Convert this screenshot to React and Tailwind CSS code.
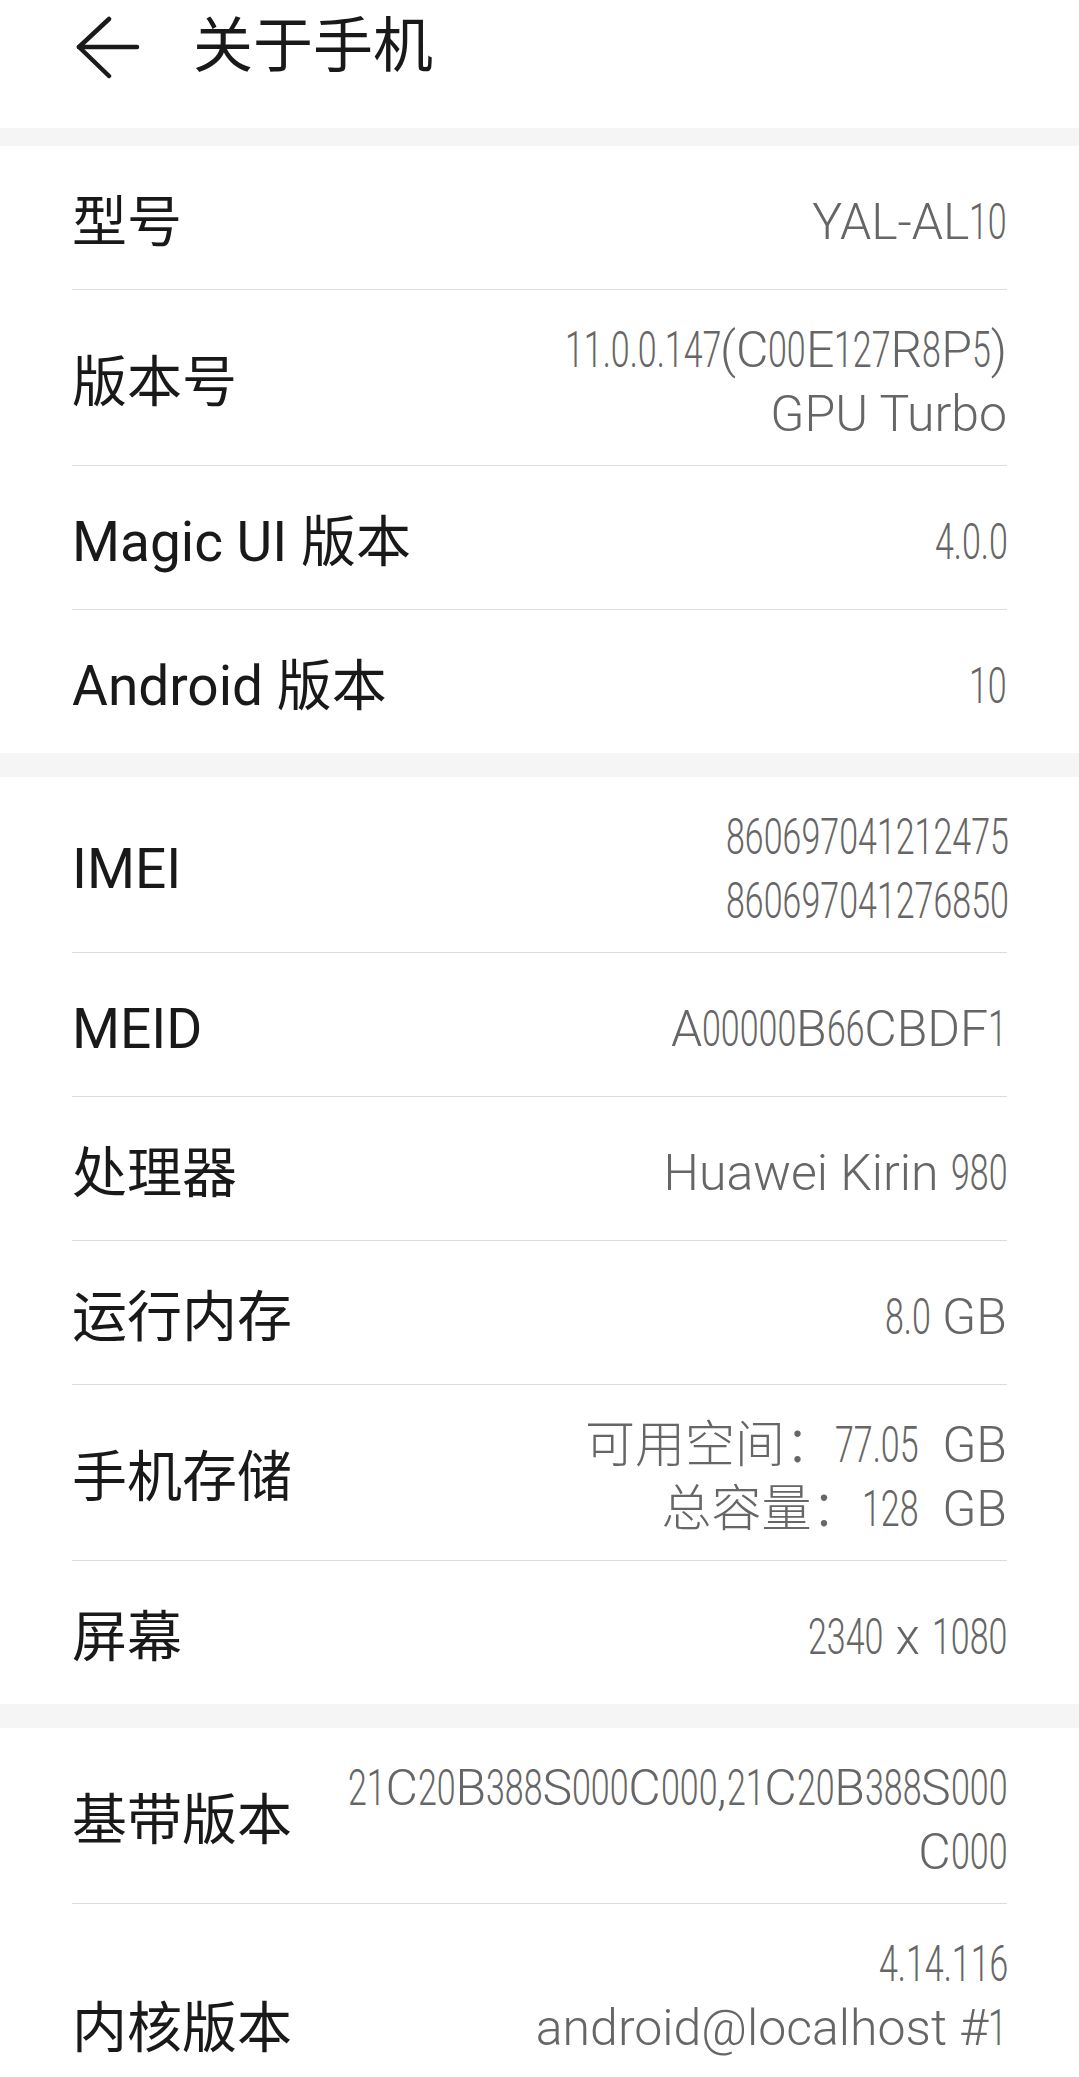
import React from 'react'

const FONT = "font-['Roboto','Noto_Sans_CJK_SC',sans-serif]"

// the phone font has tall narrow digits: squeeze digit runs and pull the rest back
const runWidth = (s) => s.split('').reduce((w, c) => w + (c === '.' ? 0.263 : 0.5615), 0)

const Val = ({ text }) => {
    const parts = text.split(/([0-9.]+)/)
    return (
        <span className="whitespace-pre">
            {parts.map((p, i) =>
                /^[0-9.]+$/.test(p) ? (
                    <span
                        key={i}
                        className="inline-block origin-left scale-x-[0.68] tabular-nums"
                        style={{ marginRight: `${-runWidth(p) * 0.32}em` }}
                    >
                        {p}
                    </span>
                ) : (
                    <span key={i}>{p}</span>
                )
            )}
        </span>
    )
}

const sections = [
    [
        { label: '型号', value: ['YAL-AL10'] },
        { label: '版本号', value: ['11.0.0.147(C00E127R8P5)', 'GPU Turbo'] },
        { label: 'Magic UI 版本', value: ['4.0.0'] },
        { label: 'Android 版本', value: ['10'] },
    ],
    [
        { label: 'IMEI', value: ['860697041212475', '860697041276850'] },
        { label: 'MEID', value: ['A00000B66CBDF1'] },
        { label: '处理器', value: ['Huawei Kirin 980'] },
        { label: '运行内存', value: ['8.0 GB'] },
        { label: '手机存储', value: ['可用空间：77.05  GB', '总容量：128  GB'] },
        { label: '屏幕', value: ['2340 x 1080'] },
    ],
    [
        { label: '基带版本', value: ['21C20B388S000C000,21C20B388S000', 'C000'] },
        { label: '内核版本', value: ['4.14.116', 'android@localhost #1'], extra: true },
    ],
]

const Row = ({ item, last }) => (
    <div className={`flex items-center justify-between gap-8 pt-[28px] pb-[19px] ${last ? 'min-h-[143px]' : 'min-h-[144px] border-b border-[#dcdcdc]'}`}>
        <div className="shrink-0 text-[55px] leading-[64px] text-[#191919]">{item.label}</div>
        <div className="flex flex-col items-end text-right text-[50px] leading-[64px] font-light text-[#666666]">
            {item.value.map((v, i) => (
                <div key={i}><Val text={v} /></div>
            ))}
            {item.extra && <div className="h-16" />}
        </div>
    </div>
)

export default function App() {
    return (
        <div className={`w-[1079px] bg-[#f5f5f5] ${FONT}`}>
            {/* Title bar */}
            <div className="h-[128px] bg-white">
                <div className="flex h-[94px] items-center pl-[76px]">
                    <svg width="64" height="64" viewBox="0 0 64 64" fill="none" stroke="#1a1a1a" strokeWidth="4.5" strokeLinecap="round" strokeLinejoin="round">
                        <path d="M33 4 L3 32 L33 61" />
                        <path d="M3 32 L61 32" />
                    </svg>
                    <h1 className="ml-[53px] text-[60px] font-normal leading-none text-[#191919]">关于手机</h1>
                </div>
            </div>

            <div className="mt-[18px] flex flex-col gap-6">
                {sections.map((rows, si) => (
                    <div key={si} className="bg-white px-[72px]">
                        {rows.map((item, i) => (
                            <Row key={item.label} item={item} last={i === rows.length - 1} />
                        ))}
                    </div>
                ))}
            </div>
        </div>
    )
}
